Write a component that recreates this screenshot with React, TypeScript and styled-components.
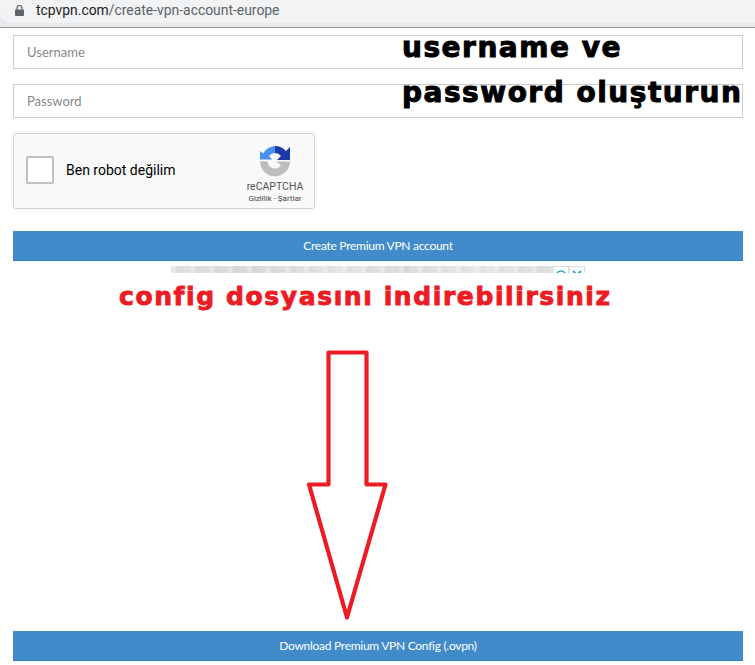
import * as React from "react";
import styled, { createGlobalStyle } from "styled-components";

const GlobalStyle = createGlobalStyle`
  html, body {
    margin: 0;
    padding: 0;
    background: #fff;
    overflow: hidden;
  }
  * {
    box-sizing: border-box;
  }
`;

const Page = styled.div`
  position: relative;
  width: 755px;
  height: 665px;
  display: flex;
  flex-direction: column;
  font-family: "Lato", "Liberation Sans", sans-serif;
`;

const BrowserChrome = styled.div`
  height: 28px;
  background: #e8eaed;
  border-bottom: 1px solid #999;
  flex-shrink: 0;
`;

const AddressBar = styled.div`
  height: 23px;
  padding: 0 0 3px 15px;
  display: flex;
  align-items: center;
  gap: 12px;
  background: #f1f3f4;
  border-radius: 0 0 0 12px;
`;

const Url = styled.span`
  font-family: "Roboto", "Liberation Sans", sans-serif;
  font-size: 13.9px;
  color: #5f6368;
  b {
    font-weight: 400;
    color: #202124;
  }
`;

const Form = styled.div`
  display: flex;
  flex-direction: column;
  padding: 7px 12px 0 13px;
`;

const Field = styled.div`
  height: 34px;
  margin-bottom: 15px;
  padding-left: 13px;
  display: flex;
  align-items: center;
  border: 1px solid #ccc;
  font-size: 13px;
  color: #888;
`;

const Captcha = styled.div`
  width: 302px;
  height: 76px;
  display: flex;
  align-items: center;
  padding: 0 12px 3px;
  background: #f9f9f9;
  border: 1px solid #d3d3d3;
  border-radius: 3px;
  box-shadow: 0 0 4px rgba(0, 0, 0, 0.08);
  font-family: "Roboto", "Liberation Sans", sans-serif;
`;

const CheckBox = styled.div`
  width: 28px;
  height: 28px;
  background: #fff;
  border: 2px solid #c1c1c1;
  border-radius: 2px;
  flex-shrink: 0;
`;

const CaptchaLabel = styled.span`
  margin-left: 12px;
  font-size: 14px;
  color: #000;
  flex: 1;
`;

const CaptchaBrand = styled.div`
  width: 60px;
  margin: 0 -3px 0 0;
  padding-top: 10px;
  display: flex;
  flex-direction: column;
  align-items: center;
  color: #555;
  svg {
    display: block;
  }
`;

const BrandName = styled.span`
  margin-top: 4px;
  font-size: 10.5px;
  line-height: 12px;
`;

const BrandLinks = styled.span`
  margin-top: 1px;
  font-size: 8px;
  line-height: 10px;
  color: #444;
  white-space: nowrap;
`;

const BlueButton = styled.div<{ $top: number }>`
  height: 30px;
  margin-top: ${props => props.$top}px;
  display: flex;
  align-items: center;
  justify-content: center;
  background: #428bca;
  border-bottom: 1px solid #357ebd;
  color: #fff;
  font-size: 12px;
  letter-spacing: -0.28px;
`;

const AdStrip = styled.div`
  width: 414px;
  height: 7px;
  margin: 5px 0 0 158px;
  display: flex;
  overflow: hidden;
`;

const AdImage = styled.div`
  flex: 1;
  background:
    repeating-linear-gradient(90deg, rgba(255, 255, 255, 0.25) 0 5px, rgba(0, 0, 0, 0.02) 5px 11px, transparent 11px 19px),
    linear-gradient(90deg, #e2e2e2, #d9d9d9 20%, #e6e6e6 45%, #dcdcdc 60%, #e8e8e8 80%, #dedede);
`;

const AdIcon = styled.div`
  width: 16px;
  height: 16px;
  background: #fff;
  border: 1px solid #ddd;
  display: flex;
  justify-content: center;
  padding-top: 3px;
  svg {
    display: block;
  }
`;

const ConfigNote = styled.div`
  margin: 9px 0 0 106px;
  height: 30px;
  font-family: "DejaVu Sans", "Liberation Sans", sans-serif;
  font-weight: 700;
  font-size: 25px;
  line-height: 30px;
  letter-spacing: 1.6px;
  color: #ed1c24;
  -webkit-text-stroke: 0.9px #ed1c24;
  white-space: nowrap;
`;

const ArrowHolder = styled.div`
  margin: 37px 0 0 293px;
  height: 272px;
  svg {
    display: block;
  }
`;

const Note = styled.div<{ $top: number }>`
  position: absolute;
  left: 402px;
  top: ${props => props.$top}px;
  font-family: "DejaVu Sans", "Liberation Sans", sans-serif;
  font-weight: 700;
  font-size: 28px;
  line-height: 32px;
  letter-spacing: 1.5px;
  color: #000;
  -webkit-text-stroke: 1px #000;
  white-space: nowrap;
`;

const LockIcon = () => (
  <svg width="9" height="11" viewBox="0 0 9 11" fill="#5f6368">
    <path d="M1 4.500h7a1 1 0 0 1 1 1V10a1 1 0 0 1-1 1H1a1 1 0 0 1-1-1V5.500a1 1 0 0 1 1-1z" />
    <path d="M2 5V3a2.500 2.500 0 0 1 5 0v2" fill="none" stroke="#5f6368" strokeWidth="1.2" />
  </svg>
);

const RecaptchaLogo = () => (
  <svg width="32" height="32" viewBox="0 0 32 32">
    <path d="M1 16A15 15 0 0 0 31 16.500H17.500L22 20.500A7.500 7.500 0 0 1 8.500 16.500Z" fill="#bdbdbd" />
    <path d="M16 1V8A8 8 0 0 0 10 11L13 14.500H1V6L4 8.500A15 15 0 0 1 16 1Z" fill="#4a90f2" />
    <path d="M16 1A15 15 0 0 1 27 6L31 2V15H18L22 11A8 8 0 0 0 16 8Z" fill="#1c3aa9" />
  </svg>
);

const ArrowDrawing = () => (
  <svg width="84" height="272" viewBox="0 0 84 272">
    <path
      d="M22.500 3.500H60.500V135.500H79.500L41 268.500L3 135.500H22.500Z"
      fill="none"
      stroke="#ed1c24"
      strokeWidth="4.200"
      strokeLinejoin="round"
    />
  </svg>
);

export default function App() {
  return (
    <Page>
      <GlobalStyle />
      <BrowserChrome>
        <AddressBar>
          <LockIcon />
          <Url>
            <b>tcpvpn.com</b>/create-vpn-account-europe
          </Url>
        </AddressBar>
      </BrowserChrome>
      <Form>
        <Field>Username</Field>
        <Field>Password</Field>
        <Captcha>
          <CheckBox />
          <CaptchaLabel>Ben robot değilim</CaptchaLabel>
          <CaptchaBrand>
            <RecaptchaLogo />
            <BrandName>reCAPTCHA</BrandName>
            <BrandLinks>Gizlilik - Şartlar</BrandLinks>
          </CaptchaBrand>
        </Captcha>
        <BlueButton $top={22}>Create Premium VPN account</BlueButton>
        <AdStrip>
          <AdImage />
          <AdIcon>
            <svg width="12" height="12" viewBox="0 0 12 12" fill="none" stroke="#2aa7c9" strokeWidth="1.500">
              <circle cx="6" cy="6" r="5" />
              <path d="M6 5v4" />
            </svg>
          </AdIcon>
          <AdIcon>
            <svg width="12" height="12" viewBox="0 0 12 12" fill="none" stroke="#2aa7c9" strokeWidth="2">
              <path d="M2 1l4 4 4-4" />
            </svg>
          </AdIcon>
        </AdStrip>
        <ConfigNote>config dosyasını indirebilirsiniz</ConfigNote>
        <ArrowHolder>
          <ArrowDrawing />
        </ArrowHolder>
        <BlueButton $top={10}>Download Premium VPN Config (.ovpn)</BlueButton>
      </Form>
      <Note $top={32}>username ve</Note>
      <Note $top={77}>password oluşturun</Note>
    </Page>
  );
}
